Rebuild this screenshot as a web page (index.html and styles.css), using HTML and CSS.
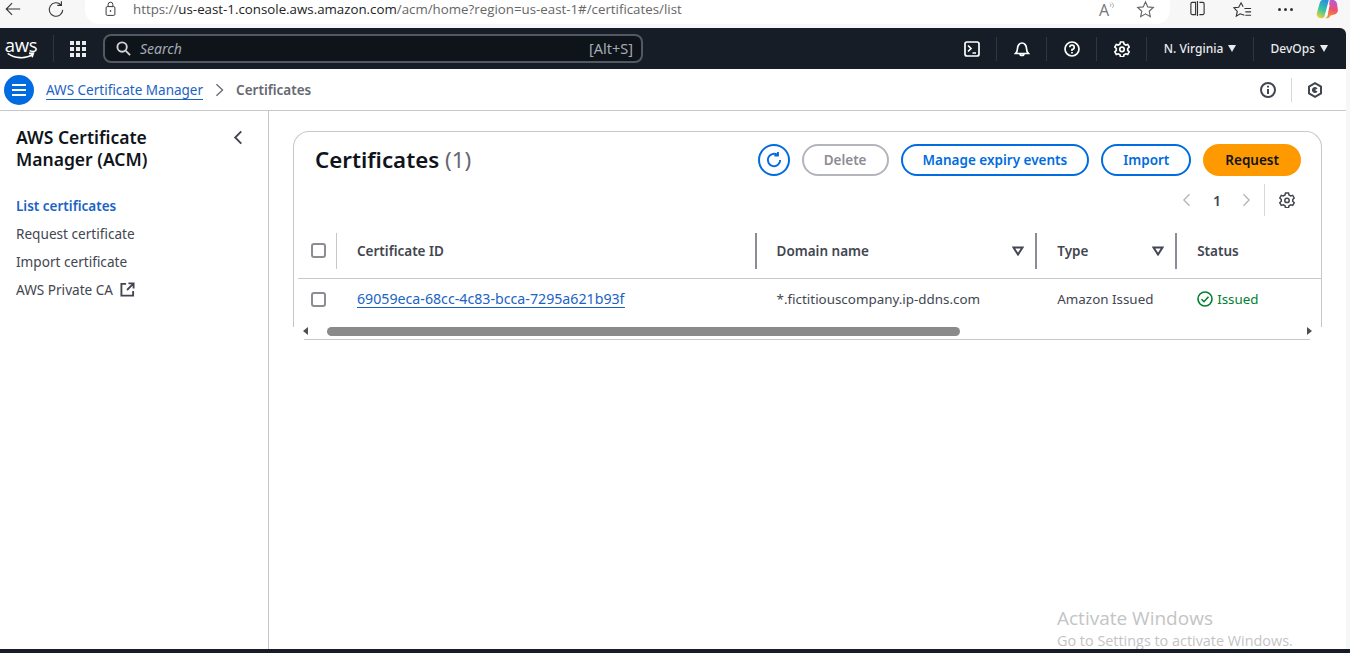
FILE: index.html
```html
<!DOCTYPE html>
<html lang="en">
<head>
  <meta charset="UTF-8">
  <title>Certificates | AWS Certificate Manager</title>
  <link rel="stylesheet" href="styles.css">
</head>
<body>
  <div class="browser-bar">
    <svg class="b-icon back" viewBox="0 0 20 20"><path d="M18 10H3M9 3.500 2.500 10 9 16.500"/></svg>
    <svg class="b-icon reload" viewBox="0 0 20 20"><path d="M15.500 5.500A7.500 7.500 0 1 0 17.500 11M16 1.500v4.500h-4.500"/></svg>
    <div class="address">
      <svg class="b-icon lock" viewBox="0 0 16 20"><rect x="2.500" y="7" width="11" height="11" rx="1.500"/><path d="M5 7V4.500a3 3 0 0 1 6 0V7"/><circle cx="8" cy="12.500" r=".6"/></svg>
      <span class="url"><span class="url-dim">https://</span>us-east-1.console.aws.amazon.com<span class="url-dim">/acm/home?region=us-east-1#/certificates/list</span></span>
      <span class="read-aloud">A<svg viewBox="0 0 8 10"><path d="M1 1.500c2 1 2 3 .5 4.500M3.500.5c3 2 3 5 .8 7"/></svg></span>
      <svg class="b-icon star" viewBox="0 0 20 20"><path d="m10 2 2.400 5.300 5.800.6-4.300 3.900 1.200 5.700L10 14.600l-5.100 2.900 1.200-5.700L1.800 7.900l5.800-.6z"/></svg>
    </div>
    <div class="browser-tools">
      <svg class="b-icon split" viewBox="0 0 18 18"><path d="M7 2.500H3.500a1.500 1.500 0 0 0-1.500 1.500v10a1.500 1.500 0 0 0 1.500 1.500H7zM9 1v16M11 2.500h3.500a1.500 1.500 0 0 1 1.500 1.500v10a1.500 1.500 0 0 1-1.500 1.500H11"/></svg>
      <svg class="b-icon favs" viewBox="0 0 20 20"><path d="M12 16 7.500 14.500 3.500 17l1-5L1 8.200l5-.6L8.500 3l2.200 4M12 9h7M13 12.500h6M13 16h6"/></svg>
      <span class="dots"><i></i><i></i><i></i></span>
      <svg class="copilot" viewBox="0 0 24 24">
        <defs>
          <linearGradient id="copilotLeft" x1="0.700" y1="0" x2="0.300" y2="1">
            <stop offset="0" stop-color="#2a8fe0"/>
            <stop offset=".55" stop-color="#38c7a0"/>
            <stop offset="1" stop-color="#e8d23a"/>
          </linearGradient>
          <linearGradient id="copilotRight" x1="0.600" y1="0" x2="0.400" y2="1">
            <stop offset="0" stop-color="#b45be0"/>
            <stop offset=".5" stop-color="#f0506e"/>
            <stop offset="1" stop-color="#f59a2e"/>
          </linearGradient>
        </defs>
        <path fill="url(#copilotLeft)" d="M8 1h6L9.500 18c-.5 2-1.500 3-3.500 3H5c-3 0-5-2.500-4-6l3-10.500C4.500 2.200 6 1 8 1z"/>
        <path fill="url(#copilotRight)" d="M15 1h3c3 0 4.500 2 5 4.500l.8 6c.3 2.500-1 5-3.800 5.500l-4 1c-1.500 3-3 3-5 3h-1c2-1 2.500-2 3-4z"/>
        <path fill="#fff" d="M13.500 6.500 15 6.800 12 17.500l-2-.2z"/>
      </svg>
    </div>
  </div>

  <header class="topnav">
    <div class="aws-logo">
      <span class="aws-word">aws</span>
      <svg viewBox="0 0 32 9"><path d="M1 1.500c8 6 20 6.500 28 1.500M25 1.500l5-.2-1.500 4.700"/></svg>
    </div>
    <span class="nav-sep"></span>
    <div class="grid-icon"><i></i><i></i><i></i><i></i><i></i><i></i><i></i><i></i><i></i></div>
    <div class="search">
      <svg viewBox="0 0 16 16"><circle cx="6.500" cy="6.500" r="5"/><path d="m10.500 10.500 4.500 4.500"/></svg>
      <span class="search-label">Search</span>
      <span class="search-key">[Alt+S]</span>
    </div>
    <div class="nav-right">
      <div class="nav-item"><svg viewBox="0 0 16 16"><rect x="1" y="1" width="14" height="14" rx="2"/><path d="m4 4.500 3 3-3 3M8.500 12H12"/></svg></div>
      <div class="nav-item"><svg viewBox="0 0 16 16"><path d="M1.500 12.500c1.500-1.500 2-2.500 2-5 0-3 2-5.500 4.500-5.500s4.500 2.500 4.500 5.500c0 2.500.5 3.500 2 5zM6 12.500a2 2 0 0 0 4 0"/></svg></div>
      <div class="nav-item"><svg viewBox="0 0 16 16"><circle cx="8" cy="8" r="7"/><path d="M5.800 6.200A2.200 2.200 0 1 1 8 8.500V10M8 11v1.500"/></svg></div>
      <div class="nav-item"><svg viewBox="0 0 16 16"><path d="m6.500 1h3l.5 2 1.700 1 2-.6 1.500 2.600-1.500 1.500v1.800l1.500 1.500-1.500 2.600-2-.6-1.700 1-.5 2h-3l-.5-2-1.700-1-2 .6L.8 10.800l1.500-1.500V7.500L.8 6l1.500-2.600 2 .6L6 3z"/><circle cx="8" cy="8.400" r="2.200"/></svg></div>
      <div class="nav-item nav-text region">N. Virginia <span class="caret"></span></div>
      <div class="nav-item nav-text account">DevOps <span class="caret"></span></div>
    </div>
  </header>

  <div class="crumbs">
    <button class="menu-btn"><i></i><i></i><i></i></button>
    <a class="crumb-link" href="#">AWS Certificate Manager</a>
    <svg class="crumb-sep" viewBox="0 0 10 16"><path d="m1.500 1.500 7 6.500-7 6.500"/></svg>
    <span class="crumb-now">Certificates</span>
    <div class="crumb-tools">
      <svg viewBox="0 0 16 16"><circle cx="8" cy="8" r="7"/><path d="M8 7v5M8 3.800v1.700"/></svg>
      <span class="crumb-rule"></span>
      <svg viewBox="0 0 16 16"><path d="M8 1.200 14 4.600v6.800L8 14.800 2 11.400V4.600z"/><path d="M10.500 6.500A3 3 0 1 0 10.500 9.500L8 8z" class="filled"/></svg>
    </div>
  </div>

  <div class="layout">
    <aside class="sidebar">
      <div class="side-head">
        <h2>AWS Certificate Manager (ACM)</h2>
        <svg viewBox="0 0 10 16"><path d="M8.500 1.500 2 8l6.500 6.500"/></svg>
      </div>
      <ul class="side-list">
        <li class="active">List certificates</li>
        <li>Request certificate</li>
        <li>Import certificate</li>
        <li>AWS Private CA <svg viewBox="0 0 16 16"><path d="M6.500 2H1.500v12.500H14V9.500M9 1.500h5.500V7M14 2 7.500 8.500"/></svg></li>
      </ul>
    </aside>

    <main class="content">
      <section class="card">
        <div class="card-head">
          <h1>Certificates <span class="count">(1)</span></h1>
          <div class="actions">
            <button class="btn icon-btn"><svg viewBox="0 0 16 16"><path d="M13.500 8A5.500 5.500 0 1 1 11 3.400M11.500 .8v3.200H8.300"/></svg></button>
            <button class="btn disabled">Delete</button>
            <button class="btn">Manage expiry events</button>
            <button class="btn">Import</button>
            <button class="btn primary">Request</button>
          </div>
        </div>
        <div class="pager">
          <svg class="pg-arrow" viewBox="0 0 10 16"><path d="M8.500 1.500 2 8l6.500 6.500"/></svg>
          <span class="pg-num">1</span>
          <svg class="pg-arrow" viewBox="0 0 10 16"><path d="m1.500 1.500 6.500 6.500-6.500 6.500"/></svg>
          <span class="pg-rule"></span>
          <svg class="pg-gear" viewBox="0 0 16 16"><path d="m6.500 1h3l.5 2 1.700 1 2-.6 1.500 2.600-1.500 1.500v1.800l1.500 1.500-1.500 2.600-2-.6-1.700 1-.5 2h-3l-.5-2-1.700-1-2 .6L.8 10.800l1.500-1.500V7.500L.8 6l1.500-2.600 2 .6L6 3z"/><circle cx="8" cy="8.400" r="2.200"/></svg>
        </div>
        <div class="table">
          <div class="row head-row">
            <div class="cell c-check"><span class="checkbox"></span></div>
            <div class="cell c-id">Certificate ID</div>
            <div class="cell c-domain">Domain name <svg class="sort" viewBox="0 0 12 10"><path d="M1.500 1.500h9L6 8.500z"/></svg></div>
            <div class="cell c-type">Type <svg class="sort" viewBox="0 0 12 10"><path d="M1.500 1.500h9L6 8.500z"/></svg></div>
            <div class="cell c-status">Status</div>
          </div>
          <div class="row body-row">
            <div class="cell c-check"><span class="checkbox"></span></div>
            <div class="cell c-id"><a href="#">69059eca-68cc-4c83-bcca-7295a621b93f</a></div>
            <div class="cell c-domain">*.fictitiouscompany.ip-ddns.com</div>
            <div class="cell c-type">Amazon Issued</div>
            <div class="cell c-status issued"><svg viewBox="0 0 16 16"><circle cx="8" cy="8" r="7"/><path d="m4.500 8.200 2.500 2.500 4.500-5"/></svg>Issued</div>
          </div>
        </div>
        <div class="scrollbar">
          <span class="sb-left"></span>
          <div class="sb-track"><span class="sb-thumb"></span></div>
          <span class="sb-right"></span>
        </div>
      </section>
    </main>
  </div>

  <div class="watermark">
    <div class="wm-title">Activate Windows</div>
    <div class="wm-sub">Go to Settings to activate Windows.</div>
  </div>
  <div class="taskbar"></div>
</body>
</html>
```

FILE: styles.css
```css
* {
    box-sizing: border-box;
}

html, body {
    height: 100%;
}

body {
    margin: 0;
    width: 1350px;
    height: 653px;
    overflow: hidden;
    display: flex;
    flex-direction: column;
    position: relative;
    background: #f7f7f7;
    font-family: "Noto Sans", "Open Sans", sans-serif;
    font-size: 13.500px;
    color: #424650;
}

svg {
    fill: none;
    stroke: currentColor;
    stroke-width: 2;
    flex: none;
}

/* browser chrome */
.browser-bar {
    height: 28px;
    flex: none;
    display: flex;
    align-items: flex-start;
    padding-left: 4px;
    background: #f7f7f7;
    color: #333;
}

.b-icon {
    stroke-width: 1.200;
}

.back {
    width: 18px;
    height: 18px;
}

.reload {
    width: 18px;
    height: 18px;
    margin-left: 25px;
}

.address {
    width: 1085px;
    height: 24px;
    margin-left: 20px;
    padding-left: 19px;
    background: #fff;
    border-radius: 0 0 14px 14px;
    display: flex;
    align-items: flex-start;
}

.lock {
    width: 13px;
    height: 16px;
    margin-top: 1px;
}

.url {
    margin-left: 16px;
    font-family: "Open Sans", sans-serif;
    font-size: 13.300px;
    line-height: 18px;
    color: #222;
    white-space: nowrap;
}

.url-dim {
    color: #666;
}

.read-aloud {
    margin-left: auto;
    margin-right: 1px;
    font-family: "Open Sans", sans-serif;
    font-size: 16px;
    line-height: 20px;
    color: #777;
    display: flex;
}

.read-aloud svg {
    width: 6px;
    height: 8px;
    stroke-width: .8;
    margin-top: 2px;
}

.star {
    width: 19px;
    height: 19px;
    margin-left: 20px;
    margin-right: 15px;
    color: #666;
}

.browser-tools {
    display: flex;
    align-items: flex-start;
    margin-left: 19px;
}

.split {
    width: 17px;
    height: 17px;
}

.favs {
    width: 19px;
    height: 19px;
    margin-left: 27px;
}

.dots {
    display: flex;
    gap: 3px;
    margin-left: 26px;
    margin-top: 8px;
}

.dots i {
    width: 3px;
    height: 3px;
    background: #333;
    border-radius: 50%;
}

.copilot {
    width: 22px;
    height: 22px;
    margin-left: 23px;
    margin-top: -1px;
    stroke: none;
}

/* top navigation */
.topnav {
    height: 41px;
    flex: none;
    margin-right: 4px;
    display: flex;
    align-items: center;
    padding-left: 5px;
    background: #161d26;
    border-radius: 0 6px 0 0;
    color: #fff;
}

.aws-logo {
    width: 32px;
    display: flex;
    flex-direction: column;
    align-items: center;
    margin-top: -1px;
}

.aws-word {
    font-family: "Open Sans", sans-serif;
    font-size: 18.500px;
    line-height: 15px;
    letter-spacing: -.3px;
}

.aws-logo svg {
    width: 30px;
    height: 8px;
    stroke-width: 1.800;
}

.nav-sep {
    width: 1px;
    height: 27px;
    margin-left: 16px;
    background: #2f3640;
}

.grid-icon {
    width: 16px;
    display: grid;
    grid-template-columns: repeat(3, 4px);
    gap: 2px;
    margin-left: 16px;
}

.grid-icon i {
    height: 4px;
    background: #e9ebed;
}

.search {
    width: 540px;
    height: 29px;
    margin: -1px 0 0 17px;
    padding: 0 8px 0 11px;
    display: flex;
    align-items: center;
    background: #0f141a;
    border: 2px solid #525963;
    border-radius: 8px;
    color: #d1d5db;
}

.search svg {
    width: 15px;
    height: 15px;
}

.search-label {
    margin-left: 9px;
    font-style: italic;
    font-size: 14px;
    color: #a4abb5;
}

.search-key {
    margin-left: auto;
    font-size: 14.500px;
    color: #a4abb5;
}

.nav-right {
    margin-left: auto;
    display: flex;
    align-items: center;
    height: 24px;
}

.nav-item {
    display: flex;
    align-items: center;
    justify-content: center;
    width: 50px;
    height: 24px;
    border-right: 1px solid #2f3640;
}

.nav-item svg {
    width: 16px;
    height: 16px;
    stroke-width: 1.700;
}

.nav-text {
    gap: 5px;
    font-size: 12px;
    font-weight: 500;
    color: #e9ebed;
}

.region {
    width: 107px;
}

.account {
    width: 74px;
    margin-right: 18px;
    border-right: 0;
    justify-content: flex-end;
}

.caret {
    width: 0;
    height: 0;
    border-left: 4.500px solid transparent;
    border-right: 4.500px solid transparent;
    border-top: 7px solid #e9ebed;
}

/* breadcrumb bar */
.crumbs {
    height: 42px;
    flex: none;
    margin-right: 4px;
    padding-left: 4px;
    display: flex;
    align-items: center;
    background: #fff;
    border-bottom: 1px solid #c6c6cd;
}

.menu-btn {
    width: 30px;
    height: 30px;
    padding: 0;
    display: flex;
    flex-direction: column;
    align-items: center;
    justify-content: center;
    gap: 3px;
    background: #006ce0;
    border: 0;
    border-radius: 50%;
}

.menu-btn i {
    width: 14px;
    height: 2px;
    background: #fff;
}

.crumb-link {
    margin: 1px 0 0 12px;
    color: #1a63c4;
    text-decoration: none;
    border-bottom: 1px solid #1a63c4;
    line-height: 18px;
}

.crumb-sep {
    width: 9px;
    height: 14px;
    margin-left: 12px;
    color: #656871;
    stroke-width: 1.500;
}

.crumb-now {
    margin: 1px 0 0 12px;
    font-weight: 600;
    color: #656871;
}

.crumb-tools {
    margin-left: auto;
    margin-right: 23px;
    display: flex;
    align-items: center;
    color: #424650;
}

.crumb-tools svg {
    width: 16px;
    height: 16px;
}

.crumb-rule {
    width: 1px;
    height: 24px;
    margin: 0 15px;
    background: #d5d8dc;
}

.crumb-tools .filled {
    fill: currentColor;
    stroke: none;
}

/* page layout */
.layout {
    flex: 1;
    margin-right: 4px;
    display: flex;
    background: #fff;
}

.sidebar {
    width: 269px;
    flex: none;
    padding: 15px 0 0 16px;
    border-right: 1px solid #c6c6cd;
}

.side-head {
    display: flex;
    justify-content: space-between;
    align-items: flex-start;
    padding-right: 25px;
}

.side-head h2 {
    width: 170px;
    margin: 0;
    font-size: 17.500px;
    line-height: 22px;
    font-weight: 600;
    color: #0f141a;
}

.side-head svg {
    width: 10px;
    height: 15px;
    margin-top: 4px;
    color: #424650;
}

.side-list {
    list-style: none;
    margin: 22px 0 0;
    padding: 0;
    font-size: 13.600px;
}

.side-list li {
    height: 28px;
    line-height: 28px;
    display: flex;
    align-items: center;
    gap: 5px;
}

.side-list .active {
    color: #1a63c4;
    font-size: 13.500px;
    font-weight: 600;
}

.side-list svg {
    width: 15px;
    height: 15px;
    margin: -2px 0 0 2px;
    stroke-width: 2;
}

/* certificates card */
.content {
    flex: 1;
    padding: 20px 24px 0;
}

.card {
    width: 1029px;
    height: 209px;
    background: #fff;
    border: 1px solid #c6c6cd;
    border-bottom: 0;
    border-radius: 16px 16px 0 0;
}

.card-head {
    height: 52px;
    display: flex;
    align-items: flex-start;
    justify-content: space-between;
    padding: 12px 20px 0 21px;
}

.card-head h1 {
    margin: 0;
    font-size: 22.300px;
    line-height: 32px;
    font-weight: 600;
    color: #0f141a;
}

.count {
    font-weight: 400;
    color: #656871;
}

.actions {
    display: flex;
    align-items: center;
    gap: 12px;
}

.btn {
    height: 32px;
    padding: 0 20px;
    font-family: inherit;
    font-size: 13.500px;
    font-weight: 600;
    color: #006ce0;
    background: #fff;
    border: 2px solid #006ce0;
    border-radius: 16px;
    white-space: nowrap;
}

.icon-btn {
    width: 32px;
    padding: 0;
    display: flex;
    align-items: center;
    justify-content: center;
}

.icon-btn svg {
    width: 18px;
    height: 18px;
    stroke-width: 1.700;
}

.disabled {
    color: #8c8c94;
    border-color: #b4b4bb;
}

.primary {
    color: #0f141a;
    background: #ff9900;
    border-color: #ff9900;
}

.pager {
    height: 32px;
    display: flex;
    align-items: center;
    justify-content: flex-end;
    padding-right: 26px;
    color: #424650;
}

.pg-arrow {
    width: 9px;
    height: 14px;
    color: #b4b4bb;
    stroke-width: 1.500;
}

.pg-num {
    margin: 0 21px 0 22px;
    font-weight: 600;
    font-size: 14px;
}

.pg-rule {
    width: 1px;
    height: 32px;
    margin: 0 14px 0 13px;
    background: #d5d8dc;
}

.pg-gear {
    width: 16px;
    height: 16px;
    stroke-width: 1.500;
}

.table {
    margin: 0 0 0 4px;
}

.row {
    display: flex;
}

.head-row {
    height: 63px;
    padding-top: 17px;
    border-bottom: 1px solid #c6c6cd;
    font-weight: 600;
}

.body-row {
    height: 48px;
    padding-bottom: 8px;
    font-size: 13.400px;
}

.cell {
    display: flex;
    align-items: center;
    padding-left: 20px;
}

.head-row .cell {
    height: 36px;
    position: relative;
    padding-right: 13px;
    justify-content: space-between;
}

.head-row .cell::after {
    content: "";
    position: absolute;
    right: 0;
    top: 0;
    bottom: 0;
    width: 2px;
    background: #8c8c94;
}

.head-row .c-check::after {
    width: 1px;
    background: #c6c6cd;
}

.head-row .c-status::after {
    display: none;
}

.c-check {
    width: 39px;
    padding-left: 13px !important;
    padding-right: 0 !important;
}

.head-row .checkbox {
    margin-top: -2px;
}

.c-id {
    width: 420px;
}

.c-domain {
    width: 281px;
}

.c-type {
    width: 140px;
}

.c-status {
    width: 144px;
}

.checkbox {
    width: 15px;
    height: 15px;
    border: 2px solid #8c8c94;
    border-radius: 3px;
    background: #fff;
}

.c-id a {
    color: #1a63c4;
    font-size: 14.200px;
    text-decoration: none;
    border-bottom: 1px solid #1a63c4;
    line-height: 17px;
}

.sort {
    width: 12px;
    height: 10px;
    color: #424650;
    stroke-width: 2;
}

.issued {
    color: #00802f;
    gap: 4px;
}

.issued svg {
    width: 16px;
    height: 16px;
    stroke-width: 1.600;
}

/* covers the card's lower corners, only the line under it stays */
.scrollbar {
    height: 13px;
    margin: 0 -1px;
    padding: 0 10px 5px;
    display: flex;
    align-items: center;
    background: linear-gradient(#c6c6cd, #c6c6cd) 11px 100% / 1006px 1px no-repeat, #fff;
}

.sb-left,
.sb-right {
    width: 0;
    height: 0;
    border-top: 4px solid transparent;
    border-bottom: 4px solid transparent;
}

.sb-left {
    border-right: 5px solid #505050;
}

.sb-right {
    border-left: 5px solid #505050;
}

.sb-track {
    flex: 1;
    margin-left: 19px;
}

.sb-thumb {
    display: block;
    width: 633px;
    height: 9px;
    background: #8a8a8a;
    border-radius: 5px;
}

/* windows overlay */
.watermark {
    position: absolute;
    left: 1057px;
    top: 606px;
    font-family: "Open Sans", sans-serif;
    color: #c4c4c4;
}

.wm-title {
    font-size: 19px;
    line-height: 25px;
}

.wm-sub {
    font-size: 14.400px;
    line-height: 19px;
}

.taskbar {
    position: absolute;
    left: 0;
    right: 0;
    bottom: 0;
    height: 4px;
    background: #161d26;
}
```
